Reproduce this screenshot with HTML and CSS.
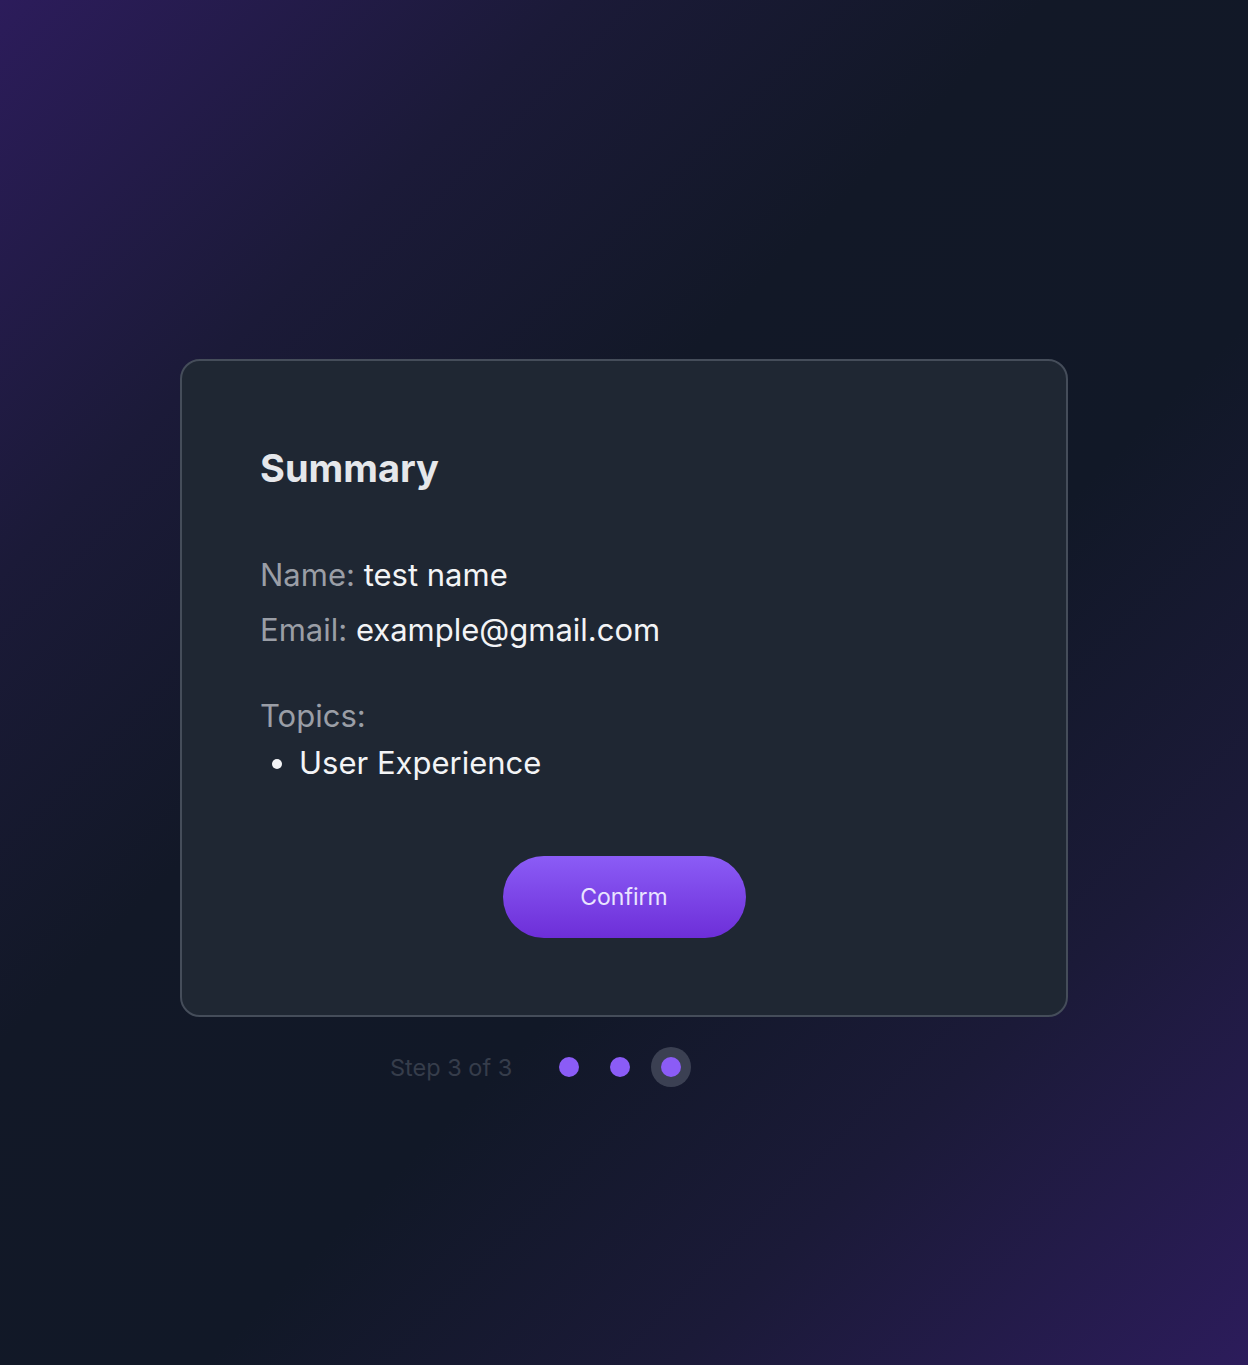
FILE: index.html
```html
<!DOCTYPE html>
<html lang="en">
<head>
<meta charset="utf-8">
<title>Summary</title>
<link rel="stylesheet" href="styles.css">
</head>
<body>
<main class="page">
  <div class="wrap">
    <section class="card">
      <h2 class="title">Summary</h2>
      <div class="fields">
        <p class="field"><span class="label">Name:</span> <span class="value">test name</span></p>
        <p class="field"><span class="label">Email:</span> <span class="value">example@gmail.com</span></p>
      </div>
      <div class="topics">
        <p class="label">Topics:</p>
        <ul class="topic-list">
          <li>User Experience</li>
        </ul>
      </div>
      <div class="actions">
        <button class="btn" type="button">Confirm</button>
      </div>
    </section>
    <div class="steps">
      <span class="step-text">Step 3 of 3</span>
      <div class="dots">
        <span class="dot"></span>
        <span class="dot"></span>
        <span class="dot active"></span>
      </div>
    </div>
  </div>
</main>
</body>
</html>
```

FILE: styles.css
```css
* { box-sizing: border-box; }
html, body { margin: 0; padding: 0; }
body {
  font-family: Inter, "Noto Sans", sans-serif;
  min-height: 1365px;
  background: linear-gradient(135deg, #2c1c5b 0%, #1b1a38 22%, #121827 40%, #111827 60%, #1b1a38 78%, #2c1c5b 100%);
  color: #e5e7eb;
}
.page {
  min-height: 1365px;
  display: flex;
  justify-content: center;
  padding-top: 359px;
}
.wrap {
  width: 888px;
  display: flex;
  flex-direction: column;
}
.card {
  width: 888px;
  height: 658px;
  background: #1f2733;
  border: 2px solid #454d5a;
  border-radius: 20px;
  padding: 80px 78px 77px;
  display: flex;
  flex-direction: column;
}
.title {
  margin: 3px 0 0;
  font-size: 38px;
  line-height: 48px;
  font-weight: 700;
  color: #e5e7eb;
}
.fields {
  margin-top: 63px;
  display: flex;
  flex-direction: column;
  gap: 15px;
}
.field {
  margin: 0;
  font-size: 31px;
  line-height: 40px;
}
.label { color: #9a9ea6; margin: 0; }
.value { color: #f3f4f6; }
.topics {
  margin-top: 46px;
  font-size: 31px;
  line-height: 40px;
}
.topic-list {
  margin: 7px 0 0;
  padding-left: 39px;
  color: #f3f4f6;
}
.topic-list li { line-height: 40px; }
.actions {
  margin-top: auto;
  display: flex;
  justify-content: center;
}
.btn {
  width: 243px;
  height: 82px;
  border: none;
  border-radius: 41px;
  background: linear-gradient(180deg, #8b5cf6 0%, #6d2ed8 100%);
  color: #e9e4ff;
  font-family: Inter, "Noto Sans", sans-serif;
  font-size: 23px;
  font-weight: 400;
  cursor: pointer;
}
.steps {
  margin-top: 30px;
  margin-left: 210px;
  display: flex;
  align-items: center;
  gap: 37px;
}
.step-text {
  font-size: 23.5px;
  color: #363d4b;
}
.dots {
  display: flex;
  align-items: center;
  gap: 11px;
}
.dot {
  width: 40px;
  height: 40px;
  display: flex;
  align-items: center;
  justify-content: center;
  border-radius: 50%;
}
.dot::after {
  content: "";
  width: 20px;
  height: 20px;
  border-radius: 50%;
  background: #8b5cf6;
}
.dot.active { background: rgba(107, 114, 128, 0.45); }
```
